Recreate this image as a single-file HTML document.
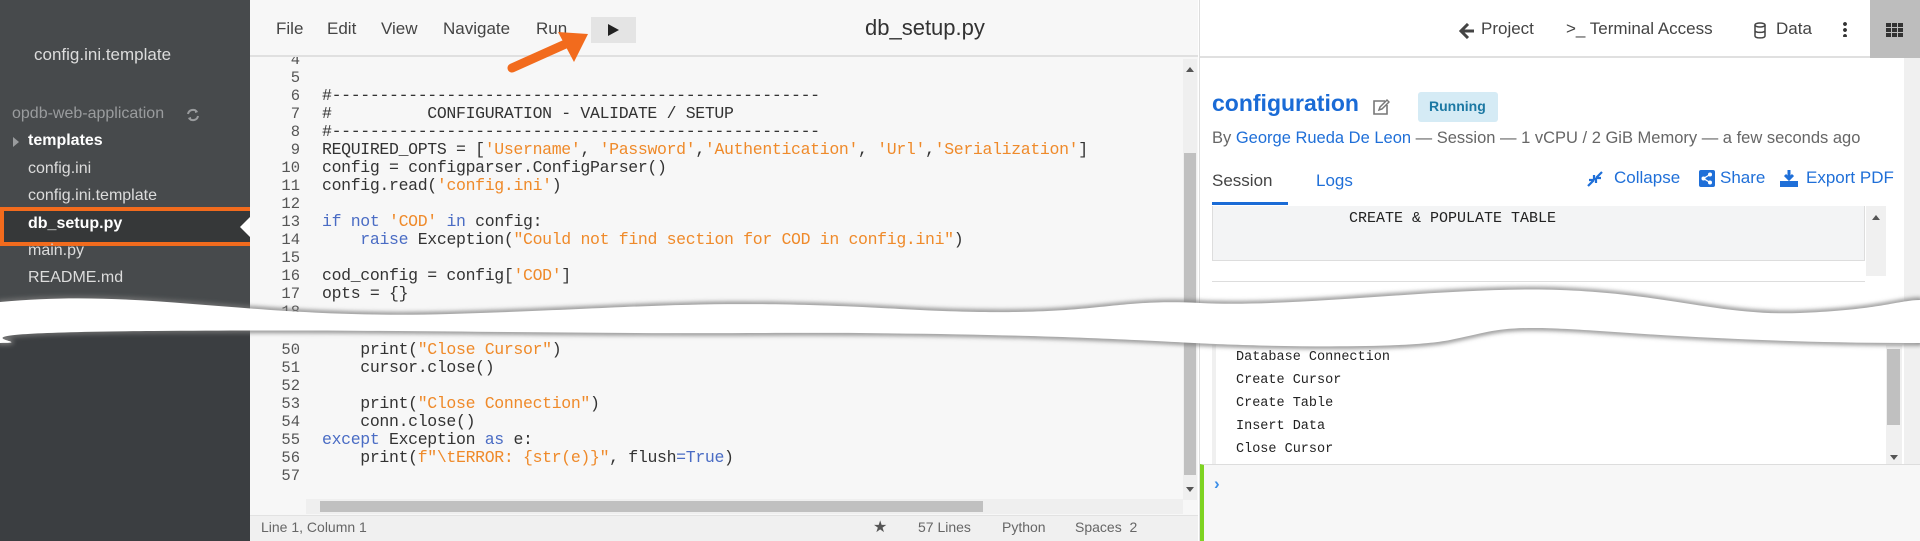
<!DOCTYPE html>
<html><head><meta charset="utf-8">
<style>
*{margin:0;padding:0;box-sizing:border-box}
body{width:1920px;height:541px;overflow:hidden;position:relative;background:#fff;font-family:"Liberation Sans",sans-serif}
.a{position:absolute;white-space:pre}
.sb{position:absolute;left:0;top:0;width:250px;height:541px;background:#3b3e41}
.sbt{position:absolute;left:0;top:0;width:250px;height:320px;background:#474a4c}
.side{color:#dcdcdc;font-size:16px}
.ed{position:absolute;left:250px;top:0;width:948px;height:541px;background:#f7f7f7}
.menu{font-size:17px;color:#444;top:19px}
.ln{position:absolute;left:250px;width:50px;text-align:right;font-family:"Liberation Mono",monospace;font-size:15.5px;color:#555;height:18px;line-height:18px}
.cd{position:absolute;left:322px;font-family:"Liberation Mono",monospace;font-size:16.5px;letter-spacing:-0.02em;color:#333;height:18px;line-height:18px;white-space:pre}
.s{color:#ef8a2a}.k{color:#4a6cc4}
.rp{position:absolute;left:1199px;top:0;width:721px;height:541px;background:#fff;border-left:1px solid #ddd}
.blue{color:#1f6fd8}
.mono{font-family:"Liberation Mono",monospace;font-size:13.5px;color:#222}
.tb{font-size:17px;color:#444;top:19px}
</style></head><body>
<div class="sb"></div><div class="sbt"></div>
<div class="a side" style="left:34px;top:45px;font-size:17px">config.ini.template</div>
<div class="a" style="left:12px;top:105px;font-size:16px;color:#9a9c9e">opdb-web-application</div>
<svg class="a" style="left:186px;top:108px" width="14" height="14" viewBox="0 0 14 14"><path d="M2 6a5 5 0 0 1 9-2M12 8a5 5 0 0 1-9 2" stroke="#9a9c9e" stroke-width="2" fill="none"/><path d="M9 1l3 3-3 1zM5 13l-3-3 3-1z" fill="#9a9c9e"/></svg>
<div class="a" style="left:13px;top:137px;width:0;height:0;border-left:6px solid #9a9c9e;border-top:5px solid transparent;border-bottom:5px solid transparent"></div>
<div class="a" style="left:28px;top:132px;font-size:16px;color:#fff;font-weight:bold">templates</div>
<div class="a side" style="left:28px;top:160px">config.ini</div>
<div class="a side" style="left:28px;top:187px">config.ini.template</div>
<div class="a" style="left:0;top:207px;width:255px;height:39px;border:4px solid #f26b1d;background:#363839"></div>
<div class="a" style="left:28px;top:215px;font-size:16px;color:#fff;font-weight:bold">db_setup.py</div>
<div class="a" style="left:240px;top:217px;width:0;height:0;border-right:10px solid #fff;border-top:10px solid transparent;border-bottom:10px solid transparent"></div>
<div class="a side" style="left:28px;top:242px">main.py</div>
<div class="a side" style="left:28px;top:269px">README.md</div>

<div class="ed"></div>
<div class="ln" style="top:51px">4</div>
<div class="a" style="left:250px;top:0;width:948px;height:57px;background:#f7f7f7;border-bottom:2px solid #e0e0e0"></div>
<div class="a menu" style="left:276px">File</div>
<div class="a menu" style="left:327px">Edit</div>
<div class="a menu" style="left:381px">View</div>
<div class="a menu" style="left:443px">Navigate</div>
<div class="a menu" style="left:536px">Run</div>
<div class="a" style="left:591px;top:17px;width:45px;height:26px;background:#e4e4e4"></div>
<div class="a" style="left:608px;top:24px;width:0;height:0;border-left:11px solid #222;border-top:6px solid transparent;border-bottom:6px solid transparent"></div>
<div class="a" style="left:865px;top:15px;font-size:22px;color:#333">db_setup.py</div>
<svg class="a" style="left:500px;top:28px" width="95" height="50"><path d="M12 40L70 14" stroke="#f26b1d" stroke-width="9" stroke-linecap="round"/><path d="M88 6L58 4 74 34z" fill="#f26b1d"/></svg>

<div class="ln" style="top:69px">5</div>
<div class="ln" style="top:87px">6</div><div class="cd" style="top:87px">#---------------------------------------------------</div>
<div class="ln" style="top:105px">7</div><div class="cd" style="top:105px">#          CONFIGURATION - VALIDATE / SETUP</div>
<div class="ln" style="top:123px">8</div><div class="cd" style="top:123px">#---------------------------------------------------</div>
<div class="ln" style="top:141px">9</div><div class="cd" style="top:141px">REQUIRED_OPTS = [<span class="s">'Username'</span>, <span class="s">'Password'</span>,<span class="s">'Authentication'</span>, <span class="s">'Url'</span>,<span class="s">'Serialization'</span>]</div>
<div class="ln" style="top:159px">10</div><div class="cd" style="top:159px">config = configparser.ConfigParser()</div>
<div class="ln" style="top:177px">11</div><div class="cd" style="top:177px">config.read(<span class="s">'config.ini'</span>)</div>
<div class="ln" style="top:195px">12</div>
<div class="ln" style="top:213px">13</div><div class="cd" style="top:213px"><span class="k">if not</span> <span class="s">'COD'</span> <span class="k">in</span> config:</div>
<div class="ln" style="top:231px">14</div><div class="cd" style="top:231px">    <span class="k">raise</span> Exception(<span class="s">"Could not find section for COD in config.ini"</span>)</div>
<div class="ln" style="top:249px">15</div>
<div class="ln" style="top:267px">16</div><div class="cd" style="top:267px">cod_config = config[<span class="s">'COD'</span>]</div>
<div class="ln" style="top:285px">17</div><div class="cd" style="top:285px">opts = {}</div>
<div class="ln" style="top:303px">18</div>
<div class="ln" style="top:341px">50</div><div class="cd" style="top:341px">    print(<span class="s">"Close Cursor"</span>)</div>
<div class="ln" style="top:359px">51</div><div class="cd" style="top:359px">    cursor.close()</div>
<div class="ln" style="top:377px">52</div>
<div class="ln" style="top:395px">53</div><div class="cd" style="top:395px">    print(<span class="s">"Close Connection"</span>)</div>
<div class="ln" style="top:413px">54</div><div class="cd" style="top:413px">    conn.close()</div>
<div class="ln" style="top:431px">55</div><div class="cd" style="top:431px"><span class="k">except</span> Exception <span class="k">as</span> e:</div>
<div class="ln" style="top:449px">56</div><div class="cd" style="top:449px">    print(<span class="s">f"\tERROR: {str(e)}"</span>, flush<span class="k">=True</span>)</div>
<div class="ln" style="top:467px">57</div>

<div class="a" style="left:1183px;top:59px;width:14px;height:441px;background:#efefef"></div>
<div class="a" style="left:1184px;top:153px;width:12px;height:322px;background:#c0c0c0"></div>
<div class="a" style="left:1186px;top:67px;border-bottom:5px solid #555;border-left:4px solid transparent;border-right:4px solid transparent"></div>
<div class="a" style="left:1186px;top:487px;border-top:5px solid #555;border-left:4px solid transparent;border-right:4px solid transparent"></div>
<div class="a" style="left:306px;top:499px;width:877px;height:15px;background:#efefef"></div>
<div class="a" style="left:320px;top:501px;width:663px;height:11px;background:#c0c0c0"></div>
<div class="a" style="left:250px;top:515px;width:948px;height:26px;background:#f0f0f0;border-top:1px solid #e2e2e2"></div>
<div class="a" style="left:261px;top:519px;font-size:14px;color:#666">Line 1, Column 1</div>
<div class="a" style="left:873px;top:517px;font-size:16px;color:#555">★</div>
<div class="a" style="left:918px;top:519px;font-size:14px;color:#666">57 Lines</div>
<div class="a" style="left:1002px;top:519px;font-size:14px;color:#666">Python</div>
<div class="a" style="left:1075px;top:519px;font-size:14px;color:#666">Spaces  2</div>

<div class="rp"></div>
<div class="a" style="left:1200px;top:56px;width:670px;height:2px;background:#e0e0e0"></div>
<div class="a" style="left:1870px;top:0;width:50px;height:58px;background:#bdbdbd"></div>
<svg class="a" style="left:1886px;top:23px" width="18" height="14"><g fill="#333"><rect x="0" y="0" width="5" height="4"/><rect x="6" y="0" width="5" height="4"/><rect x="12" y="0" width="5" height="4"/><rect x="0" y="5" width="5" height="4"/><rect x="6" y="5" width="5" height="4"/><rect x="12" y="5" width="5" height="4"/><rect x="0" y="10" width="5" height="4"/><rect x="6" y="10" width="5" height="4"/><rect x="12" y="10" width="5" height="4"/></g></svg>
<svg class="a" style="left:1459px;top:23px" width="16" height="16"><path d="M9 1L2 8l7 7M2 8h13" stroke="#444" stroke-width="3" fill="none"/></svg>
<div class="a tb" style="left:1481px">Project</div>
<div class="a tb" style="left:1566px">&gt;_ Terminal Access</div>
<svg class="a" style="left:1754px;top:22px" width="12" height="17"><g stroke="#444" stroke-width="1.5" fill="none"><ellipse cx="6" cy="3" rx="5" ry="2"/><path d="M1 3v11c0 2.5 10 2.5 10 0V3M1 8.5c0 2.5 10 2.5 10 0"/></g></svg>
<div class="a tb" style="left:1776px">Data</div>
<div class="a" style="left:1843px;top:21px;width:4px;height:16px;background:radial-gradient(circle,#333 1.8px,transparent 2px) 0 0/4px 6px"></div>

<div class="a blue" style="left:1212px;top:90px;font-size:23px;font-weight:bold;color:#1a6bd6">configuration</div>
<svg class="a" style="left:1372px;top:98px" width="18" height="18"><path d="M13 3H2v13h13V7" stroke="#777" stroke-width="1.6" fill="none"/><path d="M7 12l1-3 7-7 2 2-7 7z" stroke="#777" stroke-width="1.5" fill="none"/></svg>
<div class="a" style="left:1418px;top:92px;width:80px;height:30px;background:#d5ebf5;border-radius:3px"></div>
<div class="a" style="left:1429px;top:98px;font-size:14px;font-weight:bold;color:#1b78a3">Running</div>
<div class="a" style="left:1212px;top:129px;font-size:16.5px;color:#666">By <span class="blue">George Rueda De Leon</span> — Session — 1 vCPU / 2 GiB Memory — a few seconds ago</div>
<div class="a" style="left:1212px;top:171px;font-size:17px;color:#444">Session</div>
<div class="a blue" style="left:1316px;top:171px;font-size:17px">Logs</div>
<div class="a" style="left:1212px;top:202px;width:76px;height:3px;background:#1a6bd6"></div>
<svg class="a" style="left:1587px;top:171px" width="16" height="16"><path d="M1 15l6-6M9 7l6-6M7 9V4M7 9H2M9 7h5M9 7v5" stroke="#1f6fd8" stroke-width="2.2" fill="none"/></svg>
<div class="a blue" style="left:1614px;top:168px;font-size:17px">Collapse</div>
<svg class="a" style="left:1699px;top:170px" width="16" height="17"><rect width="16" height="17" rx="2" fill="#1f6fd8"/><g fill="#fff"><circle cx="11" cy="4.5" r="2"/><circle cx="4.5" cy="8.5" r="2"/><circle cx="11" cy="12.5" r="2"/></g><path d="M11 4.5L4.5 8.5 11 12.5" stroke="#fff" stroke-width="1.3" fill="none"/></svg>
<div class="a blue" style="left:1720px;top:168px;font-size:17px">Share</div>
<svg class="a" style="left:1780px;top:169px" width="18" height="18"><path d="M9 1v9M5 6l4 4 4-4" stroke="#1f6fd8" stroke-width="3" fill="none"/><rect x="0" y="12" width="18" height="6" fill="#1f6fd8"/></svg>
<div class="a blue" style="left:1806px;top:168px;font-size:17px">Export PDF</div>
<div class="a" style="left:1212px;top:206px;width:653px;height:55px;background:#f3f4f5;border:1px solid #ddd;border-top:none"></div>
<div class="a mono" style="left:1349px;top:210px;font-size:15px">CREATE &amp; POPULATE TABLE</div>
<div class="a" style="left:1866px;top:206px;width:20px;height:70px;background:#f0f0f0"></div>
<div class="a" style="left:1872px;top:215px;border-bottom:5px solid #555;border-left:4px solid transparent;border-right:4px solid transparent"></div>
<div class="a" style="left:1212px;top:281px;width:653px;height:1px;background:#ddd"></div>
<div class="a" style="left:1904px;top:58px;width:16px;height:406px;background:#f0f0f0"></div>

<div class="a" style="left:1212px;top:345px;width:690px;height:119px;background:#fff;border-left:4px solid #f0f0f0"></div>
<div class="a mono" style="left:1236px;top:350px">Database Connection</div>
<div class="a mono" style="left:1236px;top:373px">Create Cursor</div>
<div class="a mono" style="left:1236px;top:396px">Create Table</div>
<div class="a mono" style="left:1236px;top:419px">Insert Data</div>
<div class="a mono" style="left:1236px;top:442px">Close Cursor</div>
<div class="a" style="left:1886px;top:345px;width:16px;height:119px;background:#f0f0f0"></div>
<div class="a" style="left:1887px;top:349px;width:13px;height:76px;background:#c0c0c0"></div>
<div class="a" style="left:1890px;top:455px;border-top:5px solid #555;border-left:4px solid transparent;border-right:4px solid transparent"></div>
<div class="a" style="left:1200px;top:464px;width:720px;height:77px;background:#f7f7f7;border-top:1px solid #ddd;border-left:4px solid #7ed321"></div>
<div class="a" style="left:1214px;top:474px;font-size:17px;font-weight:bold;color:#3d8fe8">›</div>

<svg class="a" style="left:0;top:0" width="1920" height="541">
<defs><filter id="f" x="-5%" y="-50%" width="110%" height="200%"><feGaussianBlur stdDeviation="2.5"/></filter></defs>
<path d="M0,302 C150,288 250,320 450,314 S700,298 900,309 S1100,298 1200,303 S1450,286 1560,290 S1720,316 1800,313 S1900,300 1920,300 L1920,343 C1800,343 1700,338 1600,331 S1500,330 1450,340 S1250,346 1194,343 S1000,332 765,333 S400,329 153,331 S50,343 0,343 Z" fill="none" stroke="#777" stroke-width="4" filter="url(#f)"/>
<path d="M0,302 C150,288 250,320 450,314 S700,298 900,309 S1100,298 1200,303 S1450,286 1560,290 S1720,316 1800,313 S1900,300 1920,300 L1920,343 C1800,343 1700,338 1600,331 S1500,330 1450,340 S1250,346 1194,343 S1000,332 765,333 S400,329 153,331 S50,343 0,343 Z" fill="#fff"/>
</svg>
</body></html>
